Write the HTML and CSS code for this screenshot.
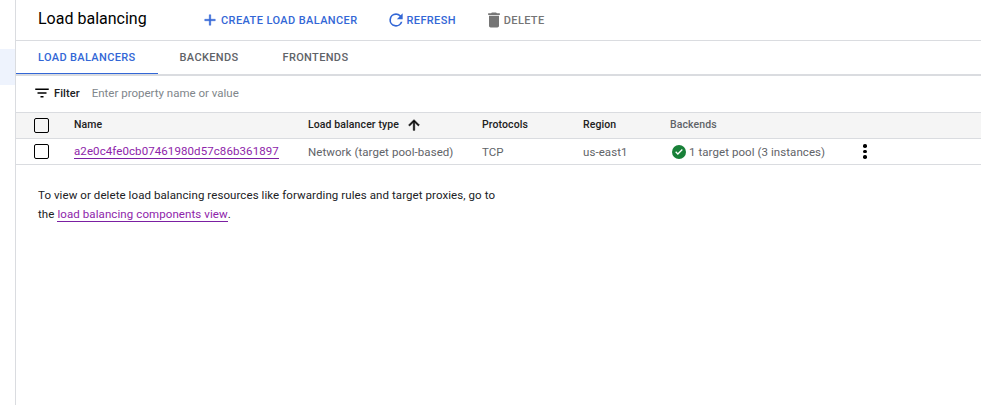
FILE: index.html
```html
<!DOCTYPE html>
<html lang="en">
<head>
  <meta charset="UTF-8" />
  <title>Load balancing</title>
  <link rel="stylesheet" href="styles.css">
</head>
<body>
  <nav class="sidenav">
    <div class="nav-active"></div>
  </nav>
  <main class="content">
    <header class="toolbar">
      <h1>Load balancing</h1>
      <a class="action create">
        <svg width="18" height="18" viewBox="0 0 24 24"><path d="M19 13h-6v6h-2v-6H5v-2h6V5h2v6h6z" stroke="currentColor" stroke-width="0.6"/></svg>
        CREATE LOAD BALANCER
      </a>
      <a class="action refresh">
        <svg width="20" height="20" viewBox="0 0 24 24"><path d="M17.65 6.35A7.95 7.95 0 0 0 12 4a8 8 0 1 0 7.73 10h-2.08A6 6 0 1 1 12 6c1.66 0 3.14.69 4.22 1.78L13 11h7V4z"/></svg>
        REFRESH
      </a>
      <a class="action delete">
        <svg width="20" height="20" viewBox="0 0 24 24"><path d="M6 19c0 1.1.9 2 2 2h8c1.1 0 2-.9 2-2V7H6zM19 4h-3.5l-1-1h-5l-1 1H5v2h14z"/></svg>
        DELETE
      </a>
    </header>

    <div class="tabs">
      <a class="tab active">LOAD BALANCERS</a>
      <a class="tab">BACKENDS</a>
      <a class="tab">FRONTENDS</a>
    </div>

    <div class="filter">
      <svg width="18" height="18" viewBox="0 0 24 24"><path d="M10 18h4v-2h-4zM3 6v2h18V6zm3 7h12v-2H6z"/></svg>
      <span class="filter-label">Filter</span>
      <span class="filter-hint">Enter property name or value</span>
    </div>

    <div class="grid head">
      <span class="check"></span>
      <span>Name</span>
      <span class="sorted">Load balancer type
        <svg width="16" height="16" viewBox="0 0 24 24"><path d="M4 12l1.41 1.41L11 7.83V20h2V7.83l5.58 5.59L20 12l-8-8z" stroke="currentColor" stroke-width="1.2"/></svg>
      </span>
      <span>Protocols</span>
      <span>Region</span>
      <span class="muted-head">Backends</span>
    </div>
    <div class="grid row">
      <span class="check"></span>
      <a class="link">a2e0c4fe0cb07461980d57c86b361897</a>
      <span>Network (target pool-based)</span>
      <span>TCP</span>
      <span>us-east1</span>
      <span class="status">
        <svg width="14" height="14" viewBox="0 0 24 24"><circle cx="12" cy="12" r="12" fill="#188038"/><path d="M5.5 12.5l4.5 4.5 8.5-8.5-1.6-1.6-6.9 6.9-2.9-2.9z" fill="#fff"/></svg>
        1 target pool (3 instances)
      </span>
      <span class="more"><i></i><i></i><i></i></span>
    </div>

    <p class="note">To view or delete load balancing resources like forwarding rules and target proxies, go to<br>the <a class="link">load balancing components view</a>.</p>
  </main>
</body>
</html>
```

FILE: styles.css
```css
body {
  font-family: Roboto, "Liberation Sans", sans-serif;
  background-color: #fff;
  margin: 0;
  padding: 0;
  display: flex;
  height: 405px;
  overflow: hidden;
  color: #202124;
}
.sidenav {
  width: 15px;
  flex: none;
  border-right: 1px solid #dadce0;
  padding-top: 49px;
}
.nav-active {
  height: 36px;
  background-color: #eef3fd;
}
.content {
  flex: 1;
  min-width: 0;
}
.toolbar {
  height: 40px;
  border-bottom: 1px solid #dadce0;
  display: flex;
  align-items: center;
  padding-left: 22px;
}
.toolbar h1 {
  margin: 0 35px 3px 0;
  width: 128px;
  font-size: 16px;
  font-weight: 400;
  color: #000;
}
.action {
  display: flex;
  align-items: center;
  font-size: 11px;
  font-weight: 500;
  letter-spacing: 0.4px;
  margin-right: 28px;
  fill: currentColor;
  color: #3367d6;
}
.action.create {
  gap: 2px;
}
.action.refresh {
  gap: 1px;
  letter-spacing: 0.35px;
}
.action.delete {
  color: #757575;
  letter-spacing: 0.35px;
}
.tabs {
  display: flex;
  height: 33px;
  border-bottom: 2px solid #dadce0;
}
.tab {
  font-size: 11px;
  font-weight: 500;
  letter-spacing: 0.35px;
  padding: 0 22px;
  line-height: 34px;
  color: #5f6368;
  height: 33px;
  box-sizing: border-box;
}
.tab.active {
  color: #3367d6;
  border-bottom: 1px solid #3367d6;
}
.filter {
  height: 36px;
  display: flex;
  align-items: center;
  padding: 0 0 2px 17px;
  box-sizing: border-box;
  font-size: 11px;
}
.filter-label {
  font-weight: 500;
  margin: 0 12px 0 3px;
  letter-spacing: 0.1px;
  color: #202124;
}
.filter-hint {
  color: #80868b;
  font-size: 11.5px;
}
.grid {
  display: grid;
  grid-template-columns: 58px 234px 174px 101px 87px 185px 20px;
  align-items: center;
  box-sizing: border-box;
  font-size: 11.5px;
  letter-spacing: 0.07px;
}
.head {
  height: 27px;
  padding-bottom: 2px;
  background-color: #f5f5f5;
  border-top: 1px solid #dadce0;
  border-bottom: 1px solid #dadce0;
  font-size: 10.5px;
  font-weight: 500;
  color: #212121;
  letter-spacing: 0.1px;
}
.head .check {
  margin-top: 2px;
}
.row {
  height: 26px;
  border-bottom: 1px solid #dadce0;
  color: #5f6368;
}
.check {
  width: 13px;
  height: 13px;
  border: 1px solid #000;
  border-radius: 2px;
  margin-left: 18px;
}
.sorted {
  display: flex;
  align-items: center;
  gap: 7px;
}
.muted-head {
  color: #5f6368;
}
.link {
  justify-self: start;
  color: #8e24aa;
  border-bottom: 1px solid #7b1fa2;
  letter-spacing: 0.09px;
  line-height: 14px;
}
.status {
  display: flex;
  align-items: center;
  gap: 3px;
  margin-left: 2px;
}
.more {
  display: flex;
  flex-direction: column;
  align-items: center;
  gap: 2px;
}
.more i {
  width: 3.5px;
  height: 3.5px;
  border-radius: 50%;
  background-color: #000;
}
.note {
  margin: 21px 0 0 22px;
  font-size: 11.5px;
  line-height: 19px;
  letter-spacing: 0.08px;
  color: #202124;
}
```
